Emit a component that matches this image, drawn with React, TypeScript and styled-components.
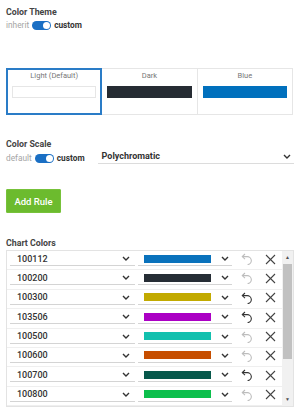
import React from 'react';
import styled, {createGlobalStyle} from 'styled-components';

const GlobalStyle = createGlobalStyle`
  body {
    margin: 0;
    background: #fff;
    font-family: Roboto, "Liberation Sans", sans-serif;
  }
`

const themes = [
    {name: 'Light (Default)', color: '#ffffff', selected: true},
    {name: 'Dark', color: '#262c33', selected: false},
    {name: 'Blue', color: '#0070bd', selected: false},
];

const chartColors = [
    {id: '100112', color: '#0a72bc', changed: false},
    {id: '100200', color: '#262d35', changed: false},
    {id: '100300', color: '#c2aa00', changed: true},
    {id: '103506', color: '#ab00c4', changed: true},
    {id: '100500', color: '#12c0ae', changed: false},
    {id: '100600', color: '#c64e00', changed: false},
    {id: '100700', color: '#07584b', changed: true},
    {id: '100800', color: '#0cbf4c', changed: false},
];

function Chevron() {
    return (
        <svg width="8" height="5" viewBox="0 0 8 5">
            <polyline points="1,1 4,4 7,1" fill="none" stroke="#333" strokeWidth="1.4"/>
        </svg>
    );
}

function UndoIcon({color}: {color: string}) {
    return (
        <svg width="12" height="12" viewBox="0 0 12 12" fill="none" stroke={color} strokeWidth="1.1">
            <path d="M4 1 L1.3 3.6 L4 6.2"/>
            <path d="M1.3 3.6 H6 A4 4 0 0 1 6.6 11.6"/>
        </svg>
    );
}

function CloseIcon() {
    return (
        <svg width="11" height="11" viewBox="0 0 11 11" stroke="#444" strokeWidth="1.1">
            <line x1="1" y1="1" x2="10" y2="10"/>
            <line x1="10" y1="1" x2="1" y2="10"/>
        </svg>
    );
}

function Toggle({off, on}: {off: string; on: string}) {
    return (
        <ToggleRow>
            <OffLabel>{off}</OffLabel>
            <Switch><Knob/></Switch>
            <OnLabel>{on}</OnLabel>
        </ToggleRow>
    );
}

function App() {
    return (
        <Page>
            <GlobalStyle/>
            <Title>Color Theme</Title>
            <Toggle off="inherit" on="custom"/>

            <CardGroup>
                {themes.map(t => (
                    <Card key={t.name} $selected={t.selected}>
                        <CardLabel>{t.name}</CardLabel>
                        <Swatch $color={t.color} $light={t.color === '#ffffff'}/>
                    </Card>
                ))}
            </CardGroup>

            <Title $top={24}>Color Scale</Title>
            <ScaleRow>
                <Toggle off="default" on="custom"/>
                <ScaleSelect>
                    <span>Polychromatic</span>
                    <Chevron/>
                </ScaleSelect>
            </ScaleRow>

            <AddButton>Add Rule</AddButton>

            <Title $top={25}>Chart Colors</Title>
            <Table>
                <Rows>
                    {chartColors.map(c => (
                        <Row key={c.id}>
                            <IdSelect>
                                <span>{c.id}</span>
                                <Chevron/>
                            </IdSelect>
                            <ColorSelect>
                                <ColorBar $color={c.color}/>
                                <Chevron/>
                            </ColorSelect>
                            <IconButton $first>
                                <UndoIcon color={c.changed ? '#333' : '#bdbdbd'}/>
                            </IconButton>
                            <IconButton>
                                <CloseIcon/>
                            </IconButton>
                        </Row>
                    ))}
                </Rows>
                <Scrollbar>
                    <ScrollArrow>▲</ScrollArrow>
                    <Thumb/>
                    <ScrollSpace/>
                    <ScrollArrow>▼</ScrollArrow>
                </Scrollbar>
            </Table>
        </Page>
    );
}

export default App;

const Page = styled.div`
  width: 300px;
  height: 415px;
  box-sizing: border-box;
  padding: 7px 6px 0 6px;
  display: flex;
  flex-direction: column;
`

const Title = styled.div<{ $top?: number }>`
  margin-top: ${p => p.$top ?? 0}px;
  font-size: 8.8px;
  line-height: 10px;
  font-weight: 700;
  color: #444;
`

const ToggleRow = styled.div`
  margin-top: 3px;
  display: flex;
  align-items: center;
  height: 10px;
  gap: 3px;
`

const OffLabel = styled.span`
  font-size: 8.3px;
  color: #a5a5a5;
`

const OnLabel = styled.span`
  font-size: 8.3px;
  font-weight: 700;
  color: #333;
`

const Switch = styled.div`
  width: 19px;
  height: 9px;
  border-radius: 5px;
  background: #1a6fc4;
  display: flex;
  align-items: center;
  justify-content: flex-end;
  padding: 0 1px;
  box-sizing: border-box;
`

const Knob = styled.div`
  width: 7px;
  height: 7px;
  border-radius: 50%;
  background: #fff;
`

const CardGroup = styled.div`
  margin-top: 38px;
  width: 287px;
  height: 47px;
  box-sizing: border-box;
  border: 1px solid #e6e6e6;
  display: flex;
`

const Card = styled.div<{ $selected: boolean }>`
  flex: 1;
  display: flex;
  flex-direction: column;
  padding: 2px 5px 0 5px;
  & + & {
    border-left: 1px solid #e6e6e6;
  }
  ${p => p.$selected && `
    outline: 2px solid #2a7cc7;
    outline-offset: -1px;
    position: relative;
    z-index: 1;
  `}
`

const CardLabel = styled.div`
  font-size: 7.5px;
  line-height: 10px;
  text-align: center;
  color: #777;
`

const Swatch = styled.div<{ $color: string; $light: boolean }>`
  margin-top: 5px;
  height: 12px;
  box-sizing: border-box;
  background: ${p => p.$color};
  border: 1px solid ${p => p.$light ? '#e6e6e6' : p.$color};
`

const ScaleRow = styled.div`
  margin-top: 1px;
  height: 14px;
  display: flex;
  align-items: flex-end;
  gap: 13px;

  & > ${ToggleRow} {
    margin-top: 0;
    align-self: center;
    margin-bottom: -2px;
  }
`

const ScaleSelect = styled.div`
  flex: 1;
  height: 14px;
  box-sizing: border-box;
  border-bottom: 1px solid #dcdcdc;
  display: flex;
  align-items: center;
  justify-content: space-between;
  padding: 0 3px 1px 4px;
  font-size: 9px;
  font-weight: 700;
  color: #333;
`

const AddButton = styled.button`
  margin-top: 25px;
  width: 55px;
  height: 24px;
  border: 1px solid #77c23a;
  border-radius: 1px;
  background: #6cbb2e;
  color: #fff;
  font-family: Roboto, "Liberation Sans", sans-serif;
  font-size: 9.5px;
  font-weight: 500;
  padding: 0;
`

const Table = styled.div`
  margin-top: 2px;
  width: 288px;
  height: 157px;
  box-sizing: border-box;
  border: 1px solid #e3e3e3;
  display: flex;
`

const Rows = styled.div`
  flex: 1;
  overflow: hidden;
`

const Row = styled.div`
  height: 19.4px;
  box-sizing: border-box;
  border-bottom: 1px solid #efefef;
  display: flex;
  align-items: flex-start;
  padding: 1px 0 0 3px;
`

const SelectBase = styled.div`
  height: 14px;
  box-sizing: border-box;
  border-bottom: 1px solid #d4d4d4;
  display: flex;
  align-items: center;
  justify-content: space-between;
`

const IdSelect = styled(SelectBase)`
  width: 125px;
  padding: 0 5px 0 7px;
  font-size: 9px;
  font-weight: 500;
  color: #333;
`

const ColorSelect = styled(SelectBase)`
  width: 94px;
  margin-left: 3px;
  padding: 0 3px 0 6px;
`

const ColorBar = styled.div<{ $color: string }>`
  width: 67px;
  height: 8px;
  background: ${p => p.$color};
`

const IconButton = styled.div<{ $first?: boolean }>`
  width: 20px;
  height: 14px;
  margin-left: ${p => p.$first ? 5 : 3}px;
  display: flex;
  align-items: center;
  justify-content: center;
`

const Scrollbar = styled.div`
  width: 11px;
  background: #f1f1f1;
  display: flex;
  flex-direction: column;
`

const ScrollArrow = styled.div`
  height: 13px;
  font-size: 5px;
  line-height: 13px;
  text-align: center;
  color: #505050;
`

const Thumb = styled.div`
  height: 95px;
  margin: 0 1px;
  background: #c1c1c1;
`

const ScrollSpace = styled.div`
  flex: 1;
`
